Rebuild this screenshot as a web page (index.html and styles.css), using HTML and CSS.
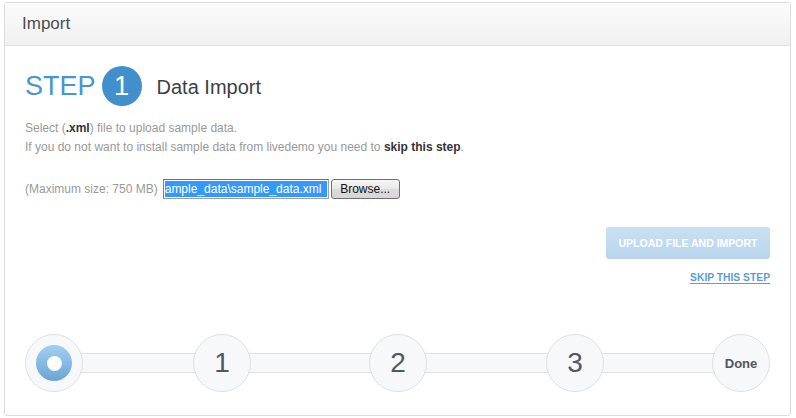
FILE: index.html
```html
<!DOCTYPE html>
<html>
<head>
<meta charset="utf-8">
<link rel="stylesheet" href="styles.css">
</head>
<body>
<div class="panel">
  <div class="panel-head">Import</div>
  <div class="panel-body">
    <div class="step-row">
      <span class="step-word">STEP</span>
      <span class="step-num">1</span>
      <span class="step-title">Data Import</span>
    </div>
    <p class="desc">Select (<b>.xml</b>) file to upload sample data.<br>If you do not want to install sample data from livedemo you need to <b>skip this step</b>.</p>
    <div class="file-row">
      <span class="max">(Maximum size: 750 MB)</span>
      <span class="file-input"><span class="sel">ample_data\sample_data.xml</span></span>
      <span class="browse">Browse...</span>
    </div>
    <div class="actions">
      <span class="btn-upload">UPLOAD FILE AND IMPORT</span>
      <a class="skip">SKIP THIS STEP</a>
    </div>
    <div class="stepper">
      <div class="track"></div>
      <div class="node"><span class="ring"><span class="hole"></span></span></div>
      <div class="node num n1">1</div>
      <div class="node num n2">2</div>
      <div class="node num n3">3</div>
      <div class="node done">Done</div>
    </div>
  </div>
</div>
</body>
</html>
```
FILE: styles.css
```css
html, body { background: #fff; }
body {
  margin: 2px 5px 2px 4px;
  font-family: "Liberation Sans", Arial, sans-serif;
  color: #333;
}
.panel {
  border: 1px solid #dcdcdc;
  border-radius: 3px;
  height: 412px;
  box-sizing: content-box;
  overflow: hidden;
}
.panel-head {
  height: 42px;
  line-height: 42px;
  padding: 0 17px;
  font-size: 17px;
  color: #4a4f55;
  background: linear-gradient(#fbfbfb, #f1f1f1);
  border-bottom: 1px solid #e0e0e0;
}
.panel-body {
  padding: 20px 20px 0 20px;
}
.step-row {
  display: flex;
  align-items: center;
  height: 40px;
}
.step-word {
  font-size: 27px;
  color: #4a95d1;
}
.step-num {
  width: 40px;
  height: 40px;
  border-radius: 50%;
  background: #4190cc;
  color: #fff;
  font-size: 27px;
  display: flex;
  align-items: center;
  justify-content: center;
  margin-left: 6px;
}
.step-title {
  font-size: 20px;
  color: #3c3f43;
  margin-left: 15px;
  margin-top: 3px;
}
.desc {
  margin: 13px 0 0 0;
  font-size: 12px;
  line-height: 19px;
  color: #999;
}
.desc b { color: #333; }
.file-row {
  display: flex;
  align-items: center;
  margin-top: 22px;
  height: 20px;
  font-size: 12px;
}
.max { color: #999; margin-right: 5px; }
.file-input {
  width: 162px;
  height: 18px;
  border: 1px solid #a0a0a0;
  border-top-color: #6e6e6e;
  border-left-color: #7d7d7d;
  background: #fff;
  overflow: hidden;
  display: flex;
  align-items: center;
  padding: 0 1px;
  box-sizing: content-box;
}
.sel {
  background: #3399ff;
  color: #fff;
  font-size: 12px;
  line-height: 16px;
  white-space: nowrap;
  width: 100%;
  overflow: hidden;
}
.browse {
  margin-left: 2px;
  width: 67px;
  height: 18px;
  border: 1px solid #707070;
  border-radius: 3px;
  background: linear-gradient(#f6f6f6 0%, #e8e8e8 50%, #dcdcdc 51%, #d6d6d6 100%);
  display: flex;
  align-items: center;
  justify-content: center;
  color: #111;
  font-size: 12px;
  box-sizing: content-box;
}
.actions {
  display: flex;
  flex-direction: column;
  align-items: flex-end;
  margin-top: 28px;
}
.btn-upload {
  width: 164px;
  height: 32px;
  border-radius: 3px;
  background: linear-gradient(#c9e0f2, #b9d5ec);
  color: #fff;
  font-weight: bold;
  font-size: 10.5px;
  display: flex;
  align-items: center;
  justify-content: center;
}
.skip {
  margin-top: 12px;
  font-size: 10.3px;
  font-weight: bold;
  color: #5d9dd6;
  text-decoration: underline;
  text-underline-offset: 2px;
  line-height: 13px;
}
.stepper {
  position: relative;
  display: flex;
  align-items: center;
  margin-top: 50px;
  height: 58px;
}
.track {
  position: absolute;
  left: 20px;
  right: 20px;
  top: 19px;
  height: 18px;
  background: #f7f8fa;
  border-top: 1px solid #e1e1e1;
  border-bottom: 1px solid #e1e1e1;
}
.node {
  position: relative;
  width: 56px;
  height: 56px;
  flex: none;
  border-radius: 50%;
  border: 1px solid #e0e0e0;
  background: #f7f8fa;
  display: flex;
  align-items: center;
  justify-content: center;
}
.n1 { margin-left: 110px; }
.n2 { margin-left: 118px; }
.n3 { margin-left: 119px; }
.done { margin-left: auto; }
.num {
  font-size: 28px;
  color: #4e5966;
}
.done {
  font-size: 13px;
  font-weight: bold;
  color: #4e5660;
}
.ring {
  width: 36px;
  height: 36px;
  border-radius: 50%;
  background: linear-gradient(#a3cff0, #6aa5d6);
  display: flex;
  align-items: center;
  justify-content: center;
}
.hole {
  width: 15px;
  height: 15px;
  border-radius: 50%;
  background: #fff;
}
```
